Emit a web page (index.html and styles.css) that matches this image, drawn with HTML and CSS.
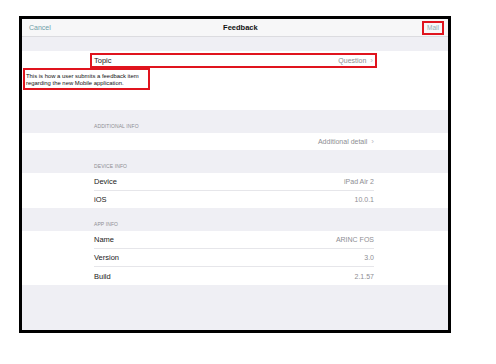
FILE: index.html
```html
<!DOCTYPE html>
<html>
<head>
<meta charset="utf-8">
<link rel="stylesheet" href="styles.css">
</head>
<body>
<div class="frame">
  <div class="nav">
    <span class="nav-btn cancel">Cancel</span>
    <span class="nav-title">Feedback</span>
    <span class="nav-btn mail">Mail</span>
  </div>
  <div class="gap-top"></div>
  <div class="white-block">
    <div class="topic">
      <span class="label">Topic</span>
      <span class="value">Question <span class="chev">›</span></span>
    </div>
    <div class="desc">This is how a user submits a feedback item<br>regarding the new Mobile application.</div>
  </div>
  <div class="section-head">ADDITIONAL INFO</div>
  <div class="group">
    <div class="row r17 last"><span class="label"></span><span class="value">Additional detail <span class="chev">›</span></span></div>
  </div>
  <div class="section-head">DEVICE INFO</div>
  <div class="group">
    <div class="row r175"><span class="label">Device</span><span class="value">iPad Air 2</span></div>
    <div class="row r175 last"><span class="label">iOS</span><span class="value">10.0.1</span></div>
  </div>
  <div class="section-head">APP INFO</div>
  <div class="group">
    <div class="row r18"><span class="label">Name</span><span class="value">ARINC FOS</span></div>
    <div class="row r18"><span class="label">Version</span><span class="value">3.0</span></div>
    <div class="row r18 last"><span class="label">Build</span><span class="value">2.1.57</span></div>
  </div>
</div>
</body>
</html>
```
FILE: styles.css
```css
* { box-sizing: border-box; }
html, body { margin: 0; padding: 0; background: #fff; }
body {
  font-family: "Liberation Sans", Arial, sans-serif;
  width: 496px;
  height: 364px;
  padding-top: 16px;
  padding-left: 19px;
}
.frame {
  width: 432px;
  height: 317px;
  border: 3px solid #000;
  background: #efeff4;
  overflow: hidden;
}
.nav {
  height: 18px;
  background: #f7f7f8;
  border-bottom: 1px solid #dcdce0;
  display: flex;
  align-items: center;
  justify-content: space-between;
  padding: 0 4px 0 7px;
}
.nav-btn { font-size: 7px; color: #6f9ea8; }
.nav-title { font-size: 7.5px; font-weight: bold; color: #111; margin-left: 8px; }
.mail {
  border: 2px solid #e0141e;
  height: 14px;
  width: 22px;
  display: flex;
  align-items: center;
  justify-content: center;
  color: #94acb2;
  font-size: 6.5px;
}
.gap-top { height: 14px; }
.white-block {
  height: 59px;
  background: #fff;
  padding-top: 2px;
}
.topic {
  margin-left: 68px;
  width: 287px;
  height: 15px;
  border: 2px solid #e0141e;
  display: flex;
  align-items: center;
  justify-content: space-between;
  padding: 0 2px 0 2px;
}
.label { font-size: 7.5px; color: #1a1a1a; }
.value { font-size: 7px; color: #8e8e93; }
.chev { color: #b8b8be; font-size: 8px; margin-left: 2px; }
.desc {
  margin-left: 1px;
  width: 127px;
  height: 22px;
  border: 2px solid #e0141e;
  font-size: 5.9px;
  line-height: 7px;
  color: #111;
  padding: 2.5px 0 0 1px;
  white-space: nowrap;
}
.section-head {
  height: 23px;
  padding-left: 72px;
  display: flex;
  align-items: flex-end;
  padding-bottom: 4px;
  font-size: 5px;
  color: #8e8e93;
  letter-spacing: 0.1px;
}
.group { background: #fff; padding: 0 74px 0 72px; }
.row {
  display: flex;
  align-items: center;
  justify-content: space-between;
  border-bottom: 1px solid #e6e6ea;
}
.row.last { border-bottom: none; }
.r17 { height: 17px; }
.r175 { height: 17.5px; }
.r18 { height: 18px; }
```
